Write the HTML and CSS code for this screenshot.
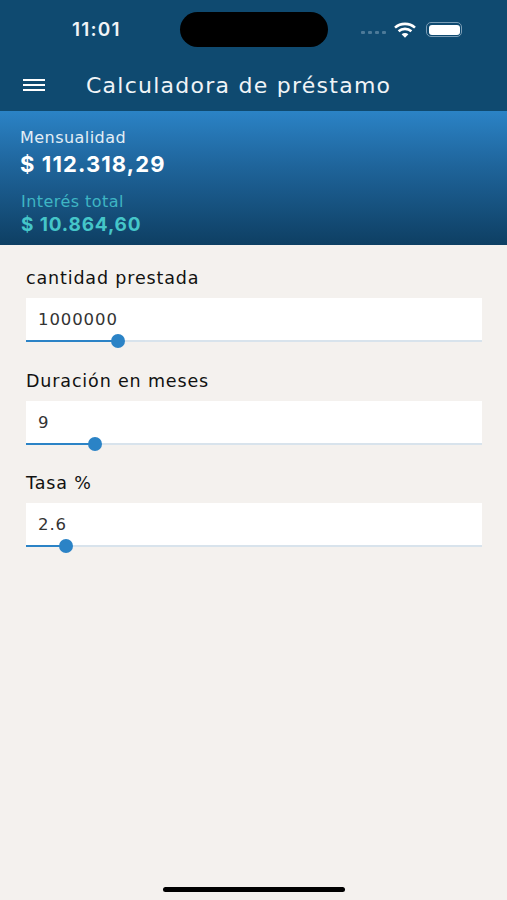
FILE: index.html
```html
<!DOCTYPE html>
<html lang="en">
<head>
    <meta charset="UTF-8">
    <meta name="viewport" content="width=device-width, initial-scale=1.0">
    <title>Calculadora de préstamo</title>
    <link rel="stylesheet" href="styles.css">
</head>
<body>
    <header class="top-bar">
        <div class="status-bar">
            <span class="clock">11:01</span>
            <div class="island"></div>
            <div class="status-icons">
                <div class="signal"><i></i><i></i><i></i><i></i></div>
                <svg class="wifi" width="22" height="16" viewBox="0 0 22 16">
                    <path d="M1 5.6C6.6.6 15.4.6 21 5.6" fill="none" stroke="#fff" stroke-width="2.6"/>
                    <path d="M4.6 9.2c3.6-3.1 9.2-3.1 12.8 0" fill="none" stroke="#fff" stroke-width="2.6"/>
                    <path d="M7.6 12.2c2-1.6 4.800-1.600 6.800 0L11 15.800z" fill="#fff"/>
                </svg>
                <div class="battery"><div class="battery-level"></div></div>
            </div>
        </div>
        <div class="title-row">
            <svg class="menu-icon" width="22" height="14" viewBox="0 0 22 14">
                <path d="M0 2h22M0 7h22M0 12h22" stroke="#fff" stroke-width="2"/>
            </svg>
            <h1>Calculadora de préstamo</h1>
        </div>
    </header>

    <section class="summary">
        <div class="summary-label">Mensualidad</div>
        <div class="summary-value">$ 112.318,29</div>
        <div class="summary-label interest">Interés total</div>
        <div class="summary-value interest-value">$ 10.864,60</div>
    </section>

    <main class="form">
        <div class="field">
            <label>cantidad prestada</label>
            <div class="input-box">1000000</div>
            <div class="slider">
                <div class="slider-fill" style="width: 92px"></div>
                <div class="slider-thumb"></div>
                <div class="slider-rest"></div>
            </div>
        </div>
        <div class="field">
            <label>Duración en meses</label>
            <div class="input-box">9</div>
            <div class="slider">
                <div class="slider-fill" style="width: 69px"></div>
                <div class="slider-thumb"></div>
                <div class="slider-rest"></div>
            </div>
        </div>
        <div class="field">
            <label>Tasa %</label>
            <div class="input-box">2.6</div>
            <div class="slider">
                <div class="slider-fill" style="width: 40px"></div>
                <div class="slider-thumb"></div>
                <div class="slider-rest"></div>
            </div>
        </div>
    </main>

    <div class="home-indicator"></div>
</body>
</html>
```

FILE: styles.css
```css
body {
    font-family: 'DejaVu Sans', 'Noto Sans', sans-serif;
    margin: 0;
    padding: 0;
    height: 900px;
    overflow: hidden;
    background: #f4f1ee;
    display: flex;
    flex-direction: column;
}

.top-bar {
    background: #0f4a70;
    height: 111px;
    color: #fff;
    box-sizing: border-box;
    padding-top: 12px;
}

.status-bar {
    display: flex;
    align-items: center;
    height: 35px;
    padding-left: 72px;
}

.clock {
    font-family: 'Inter', sans-serif;
    font-size: 19px;
    font-weight: 600;
    color: #f0f4f7;
    width: 108px;
    letter-spacing: 1.2px;
}

.island {
    width: 148px;
    height: 35px;
    border-radius: 18px;
    background: #000;
}

.status-icons {
    display: flex;
    align-items: center;
    margin-left: 33px;
}

.signal {
    display: flex;
    gap: 3px;
    margin-top: 5px;
}

.signal i {
    width: 4px;
    height: 3px;
    border-radius: 1px;
    background: #4d7a98;
}

.wifi {
    margin-left: 8px;
}

.battery {
    margin-left: 10px;
    width: 36px;
    height: 15px;
    box-sizing: border-box;
    border: 1.5px solid #7b9db5;
    border-radius: 5px;
    padding: 1.5px;
}

.battery-level {
    height: 100%;
    background: #fff;
    border-radius: 3px;
}

.title-row {
    display: flex;
    align-items: center;
    height: 40px;
    margin-top: 18px;
    padding-left: 23px;
}

.title-row h1 {
    margin: 0 0 0 41px;
    font-size: 22px;
    font-weight: 400;
    color: #f0f4f7;
    letter-spacing: 1.25px;
    white-space: nowrap;
}

.menu-icon {
    flex: none;
}

.summary {
    height: 134px;
    box-sizing: border-box;
    padding: 18px 21px 0 20px;
    background: linear-gradient(180deg, #2b83c6 0%, #1f659c 40%, #0e3f63 100%);
}

.summary-label {
    font-size: 16px;
    line-height: 18px;
    color: #e3eef6;
    letter-spacing: 0.45px;
}

.summary-value {
    font-family: 'Inter', sans-serif;
    margin-top: 4px;
    font-size: 22px;
    line-height: 27px;
    font-weight: 700;
    color: #fff;
    letter-spacing: 1.1px;
}

.summary-label.interest {
    margin-top: 15px;
    margin-left: 1px;
    color: #3fb6c4;
}

.summary-value.interest-value {
    margin-top: 1px;
    margin-left: 1px;
    font-size: 19px;
    line-height: 26px;
    color: #45c6c9;
    letter-spacing: 0.85px;
}

.form {
    padding: 22px 25px 0 26px;
    display: flex;
    flex-direction: column;
    gap: 27.5px;
}

.field label {
    display: block;
    font-size: 17.5px;
    line-height: 22px;
    color: #111;
    letter-spacing: 0.85px;
}

.input-box {
    margin-top: 9px;
    height: 42px;
    box-sizing: border-box;
    padding: 12px 12px 0;
    background: #fff;
    font-size: 16.5px;
    line-height: 20px;
    color: #333;
    letter-spacing: 0.9px;
}

.slider {
    display: flex;
    align-items: center;
    height: 2px;
}

.slider-fill {
    height: 2px;
    background: #2b83c6;
}

.slider-thumb {
    flex: none;
    width: 14px;
    height: 14px;
    margin-left: -7px;
    margin-right: -7px;
    border-radius: 50%;
    background: #2b83c6;
    position: relative;
}

.slider-rest {
    flex: 1;
    height: 2px;
    background: #d8e3ec;
}

.home-indicator {
    position: absolute;
    left: 163px;
    top: 887px;
    width: 182px;
    height: 5px;
    border-radius: 3px;
    background: #000;
}
```
